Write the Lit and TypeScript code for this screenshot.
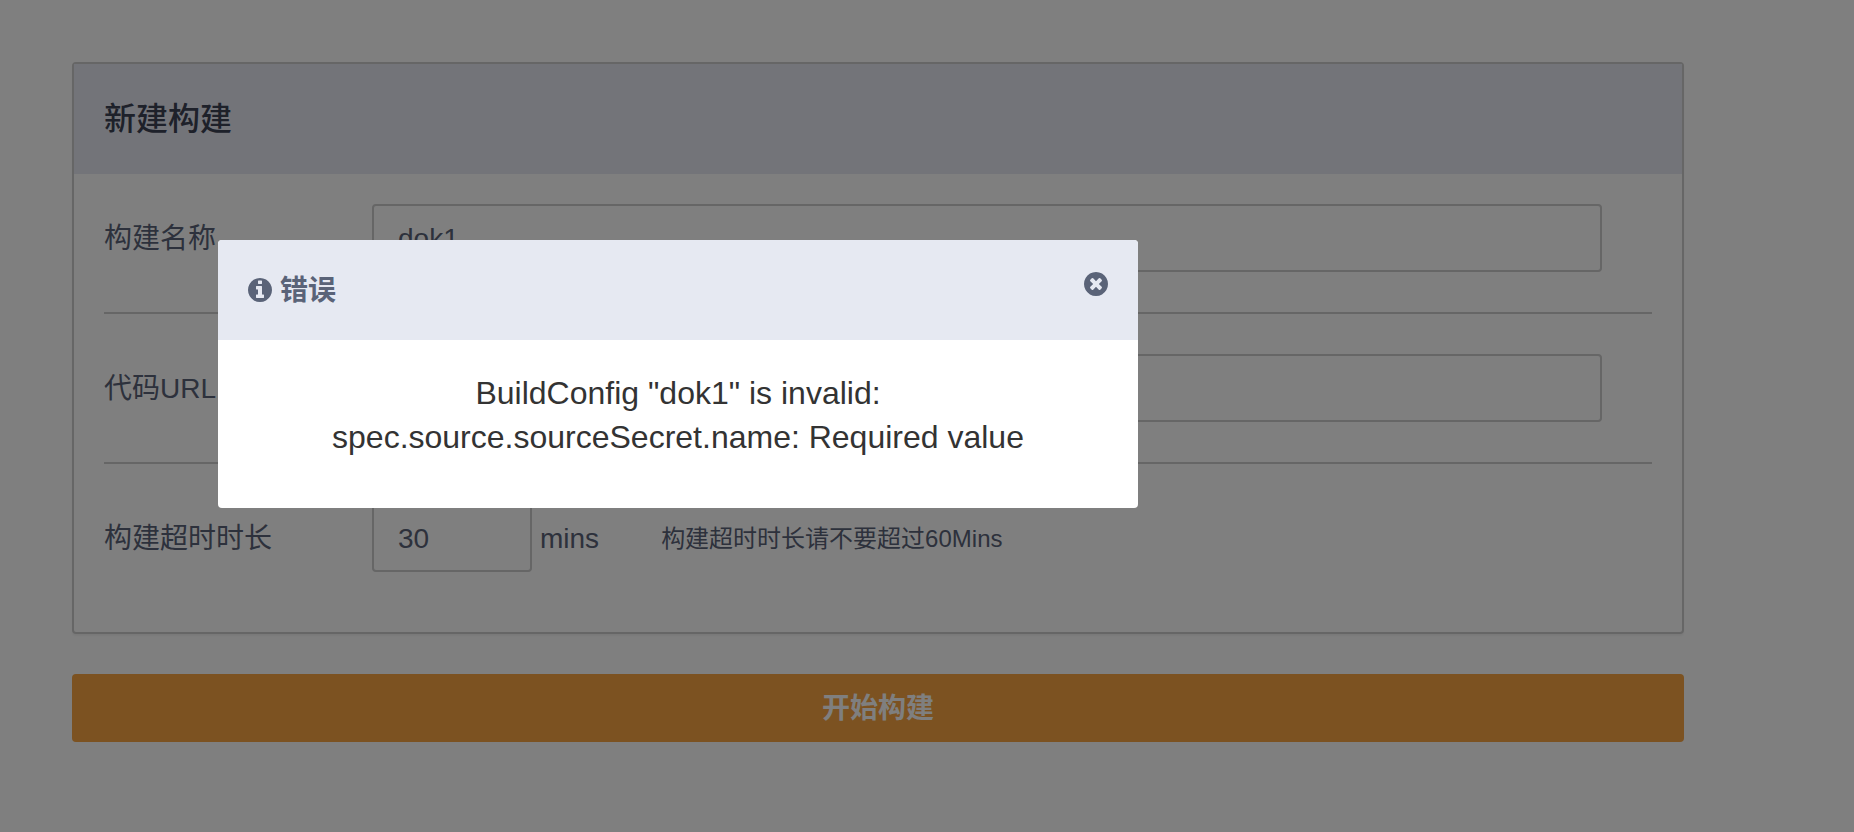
import { LitElement, html, css, svg } from "lit";
import { customElement, state } from "lit/decorators.js";

const disc =
  "m387-226q0 209-103 385.5t-279.5 279.5-385.5 103-385.5-103-279.5-279.5-103-385.5 103-385.5 279.5-279.5 385.5-103 385.5 103 279.5 279.5 103 385.5z";

const infoIcon = svg`<path d="M1152 1376v-160q0-14-9-23t-23-9h-96v-512q0-14-9-23t-23-9h-320q-14 0-23 9t-9 23v160q0 14 9 23t23 9h96v320h-96q-14 0-23 9t-9 23v160q0 14 9 23t23 9h448q14 0 23-9t9-23zm-128-896v-160q0-14-9-23t-23-9h-192q-14 0-23 9t-9 23v160q0 14 9 23t23 9h192q14 0 23-9t9-23zm640 416q0 209-103 385.5t-279.5 279.5-385.5 103-385.5-103-279.5-279.5-103-385.5 103-385.5 279.5-279.5 385.5-103 385.5 103 279.5 279.5 103 385.5z"/>`;

const closeIcon = svg`<path d="${
  "M1277 1122q0-26-19-45l-181-181 181-181q19-19 19-45 0-27-19-46l-90-90q-19-19-46-19-26 0-45 19l-181 181-181-181q-19-19-45-19-27 0-46 19l-90 90q-19 19-19 46 0 26 19 45l181 181-181 181q-19 19-19 45 0 27 19 46l90 90q19 19 46 19 26 0 45-19l181-181 181 181q19 19 45 19 27 0 46-19l90-90q19-19 19-46z" +
  disc
}"/>`;

@customElement("error-dialog")
export class ErrorDialog extends LitElement {
  static styles = css`
    :host {
      position: fixed;
      inset: 0;
      box-sizing: border-box;
      padding: 240px 218px 0;
      background: rgba(0, 0, 0, 0.5);
    }
    .dialog {
      max-width: 920px;
      border-radius: 4px;
      overflow: hidden;
      background: #fff;
    }
    .head {
      display: flex;
      align-items: flex-start;
      justify-content: space-between;
      padding: 30px;
      background: #e6e9f2;
      color: #5a6378;
    }
    .title {
      display: flex;
      align-items: center;
      gap: 8px;
      margin: 0;
      font-size: 28px;
      line-height: 40px;
      font-weight: 700;
    }
    .title span {
      padding-top: 2px;
      line-height: 38px;
    }
    .icon {
      display: block;
      width: 24px;
      height: 24px;
      fill: currentColor;
    }
    .close {
      margin: 2px 0 0;
      padding: 0;
      border: 0;
      background: none;
      color: inherit;
      cursor: pointer;
    }
    .message {
      margin: 0;
      padding: 31px 100px 49px;
      font-size: 32px;
      line-height: 44px;
      color: #333;
      text-align: center;
    }
  `;

  private close() {
    this.dispatchEvent(new CustomEvent("dismiss"));
  }

  render() {
    return html`
      <section class="dialog" role="alertdialog" aria-modal="true" aria-labelledby="title">
        <header class="head">
          <h2 class="title" id="title">
            <svg class="icon" viewBox="128 128 1536 1536" aria-hidden="true">${infoIcon}</svg>
            <span>错误</span>
          </h2>
          <button class="close" type="button" aria-label="关闭" @click=${this.close}>
            <svg class="icon" viewBox="128 128 1536 1536" aria-hidden="true">${closeIcon}</svg>
          </button>
        </header>
        <p class="message">
          BuildConfig "dok1" is invalid:<br />spec.source.sourceSecret.name: Required value
        </p>
      </section>
    `;
  }
}

@customElement("app-root")
export class AppRoot extends LitElement {
  static styles = css`
    :host {
      display: block;
      box-sizing: border-box;
      min-height: 100vh;
      padding: 62px 170px 62px 72px;
      background: #fff;
      color: #5a6378;
      font-family: "Liberation Sans", "Noto Sans CJK SC", sans-serif;
      font-size: 28px;
      line-height: 40px;
    }
    .panel {
      border: 2px solid #ccc;
      border-radius: 4px;
      box-shadow: 0 2px 2px rgba(0, 0, 0, 0.05);
    }
    .heading {
      margin: 0;
      padding: 33px 30px;
      background: #e6e8f2;
      color: #3c4355;
      font-size: 32px;
      line-height: 44px;
      font-weight: 500;
    }
    .rows {
      padding: 30px 30px 60px;
    }
    .row {
      display: flex;
      align-items: center;
    }
    .row + .row {
      margin-top: 40px;
      padding-top: 40px;
      border-top: 2px solid #ccc;
    }
    .label,
    .unit,
    .hint {
      padding-top: 2px;
    }
    .label {
      flex: none;
      width: 268px;
    }
    .field {
      box-sizing: border-box;
      height: 68px;
      padding: 2px 24px 0;
      border: 2px solid #ccc;
      border-radius: 4px;
      outline: 0;
      background: #fff;
      color: inherit;
      font: inherit;
    }
    .wide {
      flex: 1;
      min-width: 0;
      margin-right: 50px;
    }
    .short {
      width: 160px;
    }
    .unit {
      margin-left: 8px;
    }
    .hint {
      margin-left: 62px;
      font-size: 24px;
    }
    .submit {
      display: block;
      width: 100%;
      height: 68px;
      margin-top: 40px;
      padding: 2px 0 0;
      border: 0;
      border-radius: 4px;
      background: #f8a442;
      color: #fff;
      font: inherit;
      font-weight: 700;
      cursor: pointer;
    }
  `;

  @state() private showError = true;

  render() {
    return html`
      <form @submit=${(e: Event) => e.preventDefault()}>
        <section class="panel">
          <h1 class="heading">新建构建</h1>
          <div class="rows">
            <div class="row">
              <label class="label" for="name">构建名称</label>
              <input class="field wide" id="name" type="text" value="dok1" />
            </div>
            <div class="row">
              <label class="label" for="url">代码URL</label>
              <input class="field wide" id="url" type="text" />
            </div>
            <div class="row">
              <label class="label" for="timeout">构建超时时长</label>
              <input class="field short" id="timeout" type="text" inputmode="numeric" value="30" />
              <span class="unit">mins</span>
              <span class="hint">构建超时时长请不要超过60Mins</span>
            </div>
          </div>
        </section>
        <button class="submit" type="submit" @click=${() => (this.showError = true)}>开始构建</button>
      </form>
      ${this.showError
        ? html`<error-dialog @dismiss=${() => (this.showError = false)}></error-dialog>`
        : null}
    `;
  }
}
